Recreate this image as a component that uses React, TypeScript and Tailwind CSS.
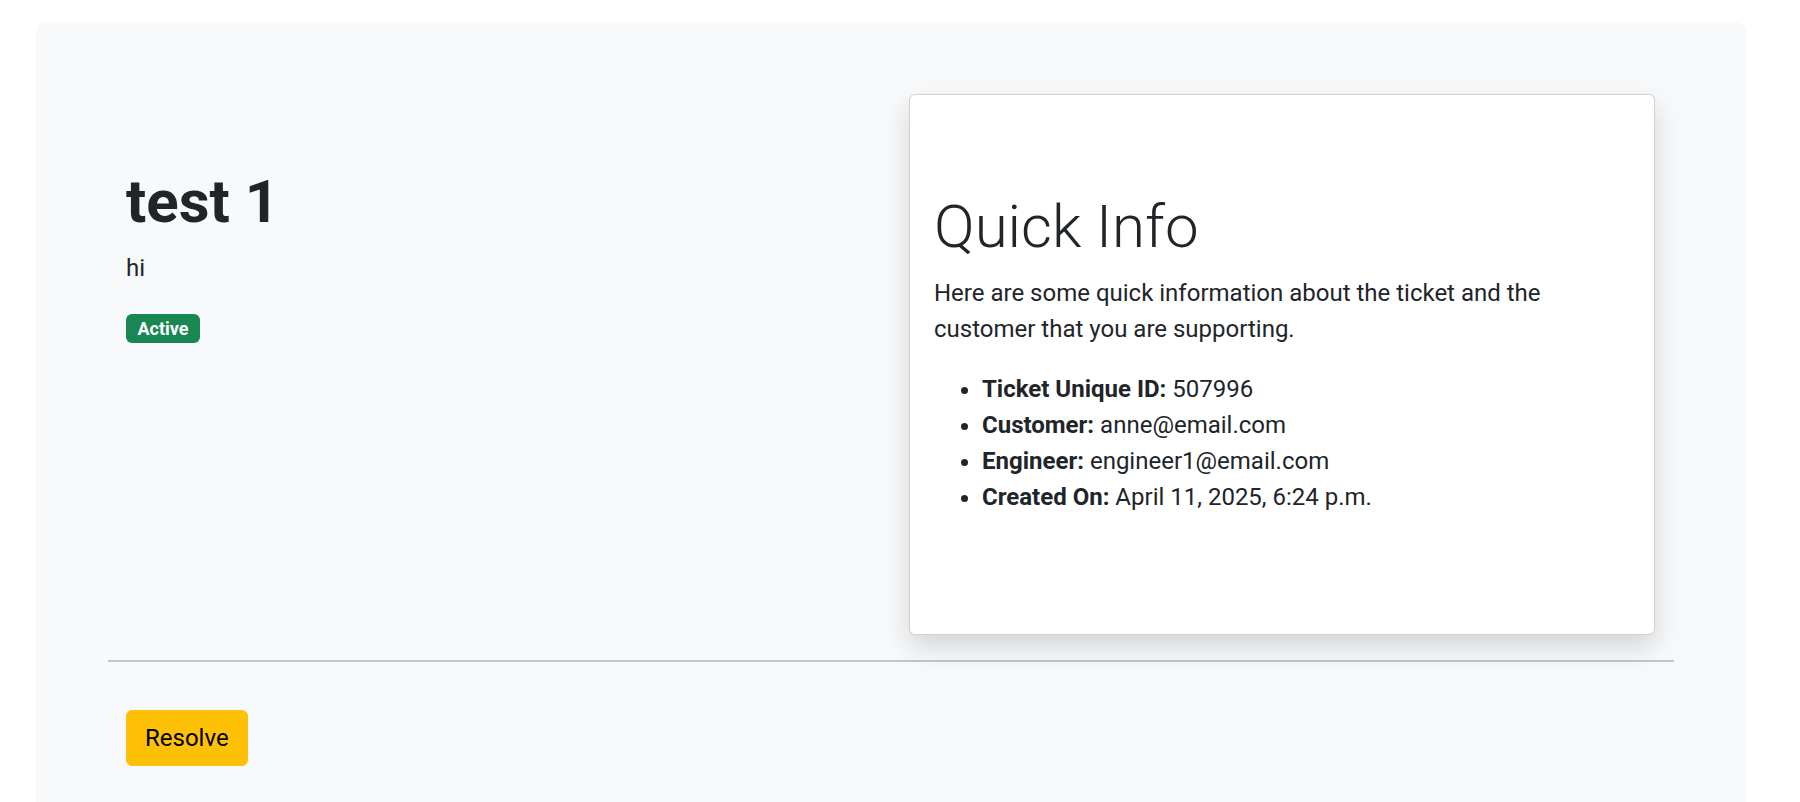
import React from "react";

const INFO = [
  { label: "Ticket Unique ID:", value: "507996" },
  { label: "Customer:", value: "anne@email.com" },
  { label: "Engineer:", value: "engineer1@email.com" },
  { label: "Created On:", value: "April 11, 2025, 6:24 p.m." },
];

export default function App() {
  return (
    <div className="h-screen overflow-hidden bg-white font-['Roboto','Liberation_Sans',sans-serif] text-[#212529]">
      <div className="ml-[36px] mt-[22px] w-[1710px] rounded-[10px] bg-[#f8f9fa] p-[72px]">
        <div className="flex items-start">
          {/* Ticket header */}
          <div className="w-[801px] pl-[18px] pt-[72px]">
            <h1 className="mb-[12px] text-[60px] font-bold leading-[1.2]">test 1</h1>
            <p className="mb-[28px] text-[24px] leading-[36px]">hi</p>
            <span className="inline-block rounded-[6px] bg-[#198754] px-[11.5px] py-[5.5px] text-[18px] font-bold leading-none text-white">
              Active
            </span>
          </div>

          {/* Quick info card */}
          <div className="flex h-[541px] w-[746px] flex-col justify-center rounded-[6px] border border-[rgba(0,0,0,0.175)] bg-white p-[24px] shadow-[0_12px_28px_rgba(0,0,0,0.15)]">
            <h2 className="mb-[12px] text-[60px] font-light leading-[1.2]">Quick Info</h2>
            <p className="mb-[24px] text-[24px] leading-[36px]">
              Here are some quick information about the ticket and the customer that you are supporting.
            </p>
            <ul className="mb-[24px] list-disc pl-[48px] text-[24px] leading-[36px]">
              {INFO.map((item) => (
                <li key={item.label}>
                  <strong className="font-bold">{item.label}</strong> {item.value}
                </li>
              ))}
            </ul>
          </div>
        </div>

        <div className="mt-[25px] h-[2px] bg-[#c4c5c7]" />

        <div className="mt-[48px] pl-[18px]">
          <button
            type="button"
            className="rounded-[6px] border border-[#ffc107] bg-[#ffc107] px-[18px] py-[9px] text-[24px] leading-[36px] text-black"
          >
            Resolve
          </button>
        </div>
      </div>
    </div>
  );
}
